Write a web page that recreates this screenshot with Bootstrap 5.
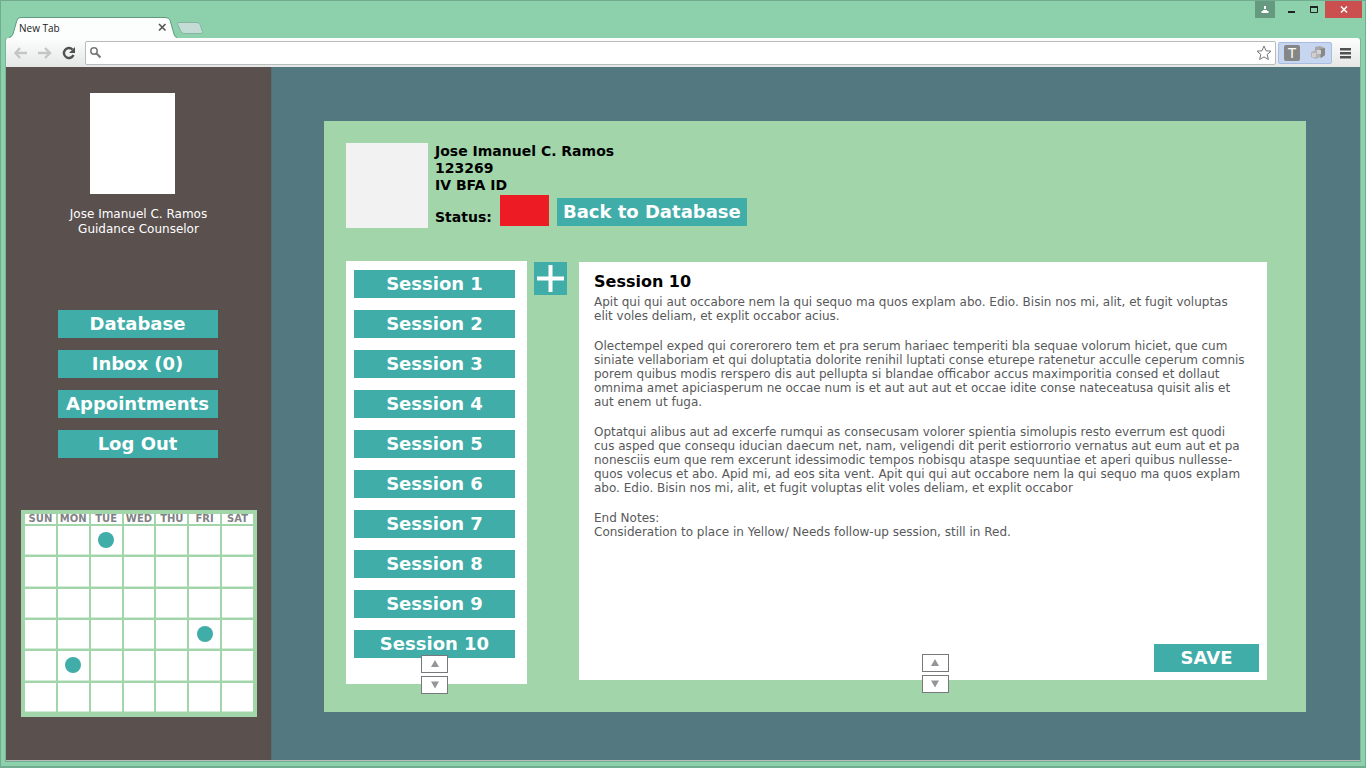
<!DOCTYPE html>
<html lang="en">
<head>
<meta charset="utf-8">
<meta name="viewport" content="width=device-width, initial-scale=1">
<title>New Tab</title>
<link href="https://cdn.jsdelivr.net/npm/bootstrap@5.3.0/dist/css/bootstrap.min.css" rel="stylesheet">
<style>
  :root { --teal: #40ada9; --mint: #a2d5aa; --frame: #8dd0ac; --frame-dark: #72ac90; }
  body { font-family: "DejaVu Sans", Verdana, sans-serif; background: #fff; }
  button { font-family: inherit; }

  .browser { min-height: 100vh; background: var(--frame); border: 1px solid var(--frame-dark); border-bottom-width: 2px; padding: 0 4px 4px; }
  .titlebar { height: 37px; padding-left: 4px; }
  .tab-item { width: 168px; height: 21px; padding-right: 10px; }
  .tab-item > svg { left: 0; top: 0; }
  .tab-title { font: 10px/20px "Open Sans", sans-serif; color: #222; padding: 1px 9px 0 10px; }
  .plain-btn { border: 0; background: none; padding: 0; line-height: 0; }
  .win-btn { width: 23px; height: 17px; }
  .win-user { width: 20px; background: #659a80; }
  .win-close { width: 37px; background: #cb4f4f; }
  .win-group { margin-right: -1px; }

  .page-frame { border: 1px solid #7db598; border-top: 0; border-bottom-color: #72ac90; }
  .toolbar { height: 29px; padding: 0 9px 0 5px; background: linear-gradient(#fdfdfd, #e5e7e7); border-radius: 3px 3px 0 0; }
  .nav-icons { width: 74px; padding-left: 2px; }
  .omnibox { height: 24px; border: 1px solid #b9bcbc; border-radius: 2px; background: #fff; padding: 0 3px; }
  .omnibox input { border: 0; outline: 0; font-size: 12px; background: none; }
  .ext-box { width: 54px; height: 22px; margin-left: 2px; background: #c7d6f0; border: 1px solid #a9bde0; border-radius: 2px; }
  .ext-t { width: 16px; height: 16px; background: #868686; border-radius: 2px; color: #fff; font: 14px/16px "Liberation Sans", sans-serif; }

  .shell { border-bottom: 1px solid #b8bcbc; }
  .side { width: 266px; flex: none; background: #5a504e; border-right: 1px solid #547077; padding: 26px 15px 0; }
  .side-photo { width: 85px; height: 101px; background: #fff; margin-right: 12px; }
  .side-name { margin: 13px 0 0; color: #fff; font-size: 12px; line-height: 15px; }
  .side-nav { gap: 12px; margin: 73px 2px 52px 0; }

  .flat-btn { height: 28px; border: 0; border-radius: 0; background: var(--teal); color: #fff; font-size: 18px; font-weight: 700; line-height: 28px; padding: 0; }
  .flat-btn:hover { background: #37999a; color: #fff; }
  .w-nav { width: 160px; }

  .month { width: 236px; height: 207px; border-collapse: separate; border-spacing: 2px; table-layout: fixed; background: var(--mint); border: solid var(--mint); border-width: 2px 2px 3px; }
  .month th { height: 10px; padding: 0; background: #fff; color: #808285; font-size: 10px; line-height: 10px; text-align: center; }
  .month td { height: 29px; padding: 0; background: #fff; border: solid #d3ecd7; border-width: 0 0 1px; text-align: center; vertical-align: middle; line-height: 0; }
  .event-dot { display: inline-block; width: 16px; height: 16px; border-radius: 50%; background: var(--teal); vertical-align: middle; }

  .stage { background: #53787f; padding: 54px 54px 48px 52px; min-width: 0; }
  .record { background: var(--mint); padding: 22px 39px 28px 22px; }
  .photo { width: 82px; height: 85px; margin-right: 7px; background: #f2f2f2; }
  .student { font-size: 14px; line-height: 17px; font-weight: 700; color: #000; margin: 0; }
  .status-row { gap: 8px; padding-bottom: 2px; }
  .status-red { width: 49px; height: 31px; background: #ed1c24; }
  .back-btn { width: 190px; }

  .work { margin-top: 33px; }
  .sessions { width: 181px; height: 423px; background: #fff; padding: 9px 12px 0 8px; gap: 12px; flex: none; }
  .add-btn { width: 33px; height: 33px; background: var(--teal); flex: none; margin: 1px 12px 0 7px; }
  .paper { background: #fff; margin-top: 1px; height: 418px; padding: 10px 8px 8px 15px; color: #58595b; font-size: 12px; line-height: 14px; min-width: 0; }
  .paper h1 { font-size: 16px; line-height: 20px; font-weight: 700; color: #000; margin: 0 0 3px; }
  .paper p { margin: 0 0 16px; }
  .save-btn { width: 105px; }

  .stepper { left: 0; right: 0; bottom: -13px; gap: 3px; z-index: 1; pointer-events: none; }
  .paper .stepper { padding-left: 24px; }
  .sessions .stepper { bottom: -10px; padding-right: 4px; }
  .step-btn { width: 27px; height: 18px; background: #fff; border: 1px solid #77787b; padding: 0; line-height: 0; pointer-events: auto; }
</style>
</head>
<body>
<div class="browser d-flex flex-column">
  <header class="titlebar d-flex align-items-end">
    <div class="tab-item position-relative d-flex justify-content-between">
      <svg class="position-absolute" width="168" height="21" viewBox="0 0 168 21" aria-hidden="true"><path d="M0 21Q3 20 4 17L8 3Q9 .5 12 .5H156Q160 .5 161 3L165 17Q166 20.500 168 20.500V21Z" fill="#fcfdfd"/><path d="M0 20.500Q3 20 4 17L8 3Q9 .5 12 .5H156Q160 .5 161 3L165 17Q166 20.500 168 20.500" fill="none" stroke="#5f9a7e"/></svg>
      <span class="tab-title position-relative">New Tab</span>
      <button class="plain-btn position-relative" aria-label="Close tab"><svg width="9" height="9" viewBox="0 0 9 9"><path d="M1 1l6.500 6.500M7.500 1L1 7.500" stroke="#555" stroke-width="1.600"/></svg></button>
    </div>
    <button class="plain-btn align-self-end pb-1" aria-label="Open new tab"><svg class="d-block" width="26" height="12" viewBox="1 0 26 12"><path d="M3 .5h18q2 0 3 2l2.500 7q.5 2-1.500 2H8q-2 0-3-2L1.500 2Q1 .5 3 .5Z" fill="#c4dbd6" stroke="#83b7a0"/></svg></button>
    <div class="win-group d-flex ms-auto align-self-start">
      <button class="plain-btn win-btn win-user" aria-label="Profile"><svg width="8" height="8" viewBox="0 0 8 8"><path d="M3 0h2v3H3zM2 4h4v1H7.500v2H.5V5h1.500z" fill="#fff"/></svg></button>
      <button class="plain-btn win-btn ms-1" aria-label="Minimize"><svg width="8" height="8"><path d="M1 5h7v2H1z" fill="#222"/></svg></button>
      <button class="plain-btn win-btn" aria-label="Maximize"><svg width="8" height="7"><path d="M.5 1h7v5.500h-7z" fill="none" stroke="#222"/><path d="M0 0h8v2H0z" fill="#222"/></svg></button>
      <button class="plain-btn win-btn win-close" aria-label="Close window"><svg width="8" height="7" viewBox="0 0 8 7"><path d="M1 .5l6 6M7 .5l-6 6" stroke="#fff" stroke-width="1.500"/></svg></button>
    </div>
  </header>

  <div class="page-frame d-flex flex-column flex-grow-1">
    <div class="toolbar d-flex align-items-center">
      <div class="nav-icons d-flex align-items-center gap-2">
        <button class="plain-btn" aria-label="Back"><svg width="16" height="14" viewBox="0 0 16 14"><path d="M7 2L2.500 7 7 12M3 7h11" fill="none" stroke="#c4c6c6" stroke-width="2.400"/></svg></button>
        <button class="plain-btn" aria-label="Forward"><svg width="16" height="14" viewBox="0 0 16 14"><path d="M8 2l5 5-5 5M13 7H1" fill="none" stroke="#c4c6c6" stroke-width="2.400"/></svg></button>
        <button class="plain-btn" aria-label="Reload"><svg width="16" height="14" viewBox="0 0 16 14"><path d="M11.500 3.500A5 5 0 1 0 12.500 9" fill="none" stroke="#505050" stroke-width="2.400"/><path d="M14 1v6H8z" fill="#505050"/></svg></button>
      </div>
      <div class="omnibox d-flex align-items-center flex-grow-1">
        <svg width="13" height="13" viewBox="0 0 13 13" aria-hidden="true"><circle cx="5" cy="5" r="3.200" fill="none" stroke="#777" stroke-width="1.500"/><path d="M7.500 7.500l4 4" stroke="#777" stroke-width="2.200"/></svg>
        <input class="flex-grow-1" type="text" aria-label="Address and search">
        <button class="plain-btn" aria-label="Bookmark"><svg width="16" height="16" viewBox="0 0 16 16"><path d="M8 1l2 4.700 5 .5-3.800 3.300 1.200 5L8 11.900l-4.400 2.600 1.200-5L1 6.200l5-.5z" fill="#fff" stroke="#777"/></svg></button>
      </div>
      <div class="ext-box d-flex align-items-center justify-content-around">
        <button class="plain-btn ext-t">T</button>
        <button class="plain-btn" aria-label="Extension"><svg width="16" height="16" viewBox="0 0 16 16"><path d="M5 2l5-1 5 2v7l-4 3-6-3z" fill="#a7a7a7"/><path d="M10 4l5-1v7l-4 3z" fill="#888"/><path d="M1 7l5-2 4 1v6l-4 2-5-2z" fill="#b4b4b4"/><path d="M2 8h4v4H2z" fill="#cfcfcf"/><path d="M7 5h4v4H7z" fill="#d3d3d3"/></svg></button>
      </div>
      <button class="plain-btn ms-auto ps-2" aria-label="Menu"><svg width="11" height="12"><path d="M0 1h11v2.500H0zM0 5h11v2.500H0zM0 9h11v2.500H0z" fill="#505050"/></svg></button>
    </div>

    <div class="shell d-flex flex-grow-1">
      <aside class="side">
        <div class="text-center">
          <div class="side-photo d-inline-block align-top"></div>
          <p class="side-name">Jose Imanuel C. Ramos<br>Guidance Counselor</p>
        </div>
        <nav class="side-nav d-flex flex-column align-items-center">
          <button class="btn flat-btn w-nav">Database</button>
          <button class="btn flat-btn w-nav">Inbox (0)</button>
          <button class="btn flat-btn w-nav">Appointments</button>
          <button class="btn flat-btn w-nav">Log Out</button>
        </nav>
        <table class="month">
          <thead><tr><th>SUN</th><th>MON</th><th>TUE</th><th>WED</th><th>THU</th><th>FRI</th><th>SAT</th></tr></thead>
          <tbody>
            <tr><td></td><td></td><td><span class="event-dot"></span></td><td></td><td></td><td></td><td></td></tr>
            <tr><td></td><td></td><td></td><td></td><td></td><td></td><td></td></tr>
            <tr><td></td><td></td><td></td><td></td><td></td><td></td><td></td></tr>
            <tr><td></td><td></td><td></td><td></td><td></td><td><span class="event-dot"></span></td><td></td></tr>
            <tr><td></td><td><span class="event-dot"></span></td><td></td><td></td><td></td><td></td><td></td></tr>
            <tr><td></td><td></td><td></td><td></td><td></td><td></td><td></td></tr>
          </tbody>
        </table>
      </aside>

      <main class="stage flex-grow-1">
        <section class="record">
          <div class="d-flex">
            <div class="photo"></div>
            <div class="d-flex flex-column justify-content-between">
              <p class="student">Jose Imanuel C. Ramos<br>123269<br>IV BFA ID</p>
              <div class="status-row d-flex align-items-end">
                <span class="student">Status:</span>
                <span class="status-red"></span>
                <button class="btn flat-btn back-btn">Back to Database</button>
              </div>
            </div>
          </div>

          <div class="work d-flex align-items-start">
            <div class="sessions d-flex flex-column position-relative">
              <button class="btn flat-btn">Session 1</button>
              <button class="btn flat-btn">Session 2</button>
              <button class="btn flat-btn">Session 3</button>
              <button class="btn flat-btn">Session 4</button>
              <button class="btn flat-btn">Session 5</button>
              <button class="btn flat-btn">Session 6</button>
              <button class="btn flat-btn">Session 7</button>
              <button class="btn flat-btn">Session 8</button>
              <button class="btn flat-btn">Session 9</button>
              <button class="btn flat-btn">Session 10</button>
              <div class="stepper position-absolute d-flex flex-column align-items-center">
                <button class="step-btn" aria-label="Scroll sessions up"><svg width="8" height="8"><path d="M4 0l4 7H0z" fill="#939598"/></svg></button>
                <button class="step-btn" aria-label="Scroll sessions down"><svg width="8" height="8"><path d="M4 7.500L8 .5H0z" fill="#939598"/></svg></button>
              </div>
            </div>
            <button class="plain-btn add-btn" aria-label="Add session"><svg width="27" height="27"><path d="M11.500 0h4v11.500H27v4H15.500V27h-4V15.500H0v-4h11.500z" fill="#fff"/></svg></button>
            <article class="paper d-flex flex-column flex-grow-1 position-relative">
              <h1>Session 10</h1>
              <p>Apit qui qui aut occabore nem la qui sequo ma quos explam abo. Edio. Bisin nos mi, alit, et fugit voluptas<br>elit voles deliam, et explit occabor acius.</p>
              <p>Olectempel exped qui corerorero tem et pra serum hariaec temperiti bla sequae volorum hiciet, que cum<br>siniate vellaboriam et qui doluptatia dolorite renihil luptati conse eturepe ratenetur acculle ceperum comnis<br>porem quibus modis rerspero dis aut pellupta si blandae officabor accus maximporitia consed et dollaut<br>omnima amet apiciasperum ne occae num is et aut aut aut et occae idite conse nateceatusa quisit alis et<br>aut enem ut fuga.</p>
              <p>Optatqui alibus aut ad excerfe rumqui as consecusam volorer spientia simolupis resto everrum est quodi<br>cus asped que consequ iducian daecum net, nam, veligendi dit perit estiorrorio vernatus aut eum aut et pa<br>nonesciis eum que rem excerunt idessimodic tempos nobisqu ataspe sequuntiae et aperi quibus nullesse-<br>quos volecus et abo. Apid mi, ad eos sita vent. Apit qui qui aut occabore nem la qui sequo ma quos explam<br>abo. Edio. Bisin nos mi, alit, et fugit voluptas elit voles deliam, et explit occabor</p>
              <p>End Notes:<br>Consideration to place in Yellow/ Needs follow-up session, still in Red.</p>
              <button class="btn flat-btn save-btn mt-auto align-self-end">SAVE</button>
              <div class="stepper position-absolute d-flex flex-column align-items-center">
                <button class="step-btn" aria-label="Scroll notes up"><svg width="8" height="8"><path d="M4 0l4 7H0z" fill="#939598"/></svg></button>
                <button class="step-btn" aria-label="Scroll notes down"><svg width="8" height="8"><path d="M4 7.500L8 .5H0z" fill="#939598"/></svg></button>
              </div>
            </article>
          </div>
        </section>
      </main>
    </div>
  </div>
</div>
<script src="https://cdn.jsdelivr.net/npm/bootstrap@5.3.0/dist/js/bootstrap.bundle.min.js"></script>
</body>
</html>
